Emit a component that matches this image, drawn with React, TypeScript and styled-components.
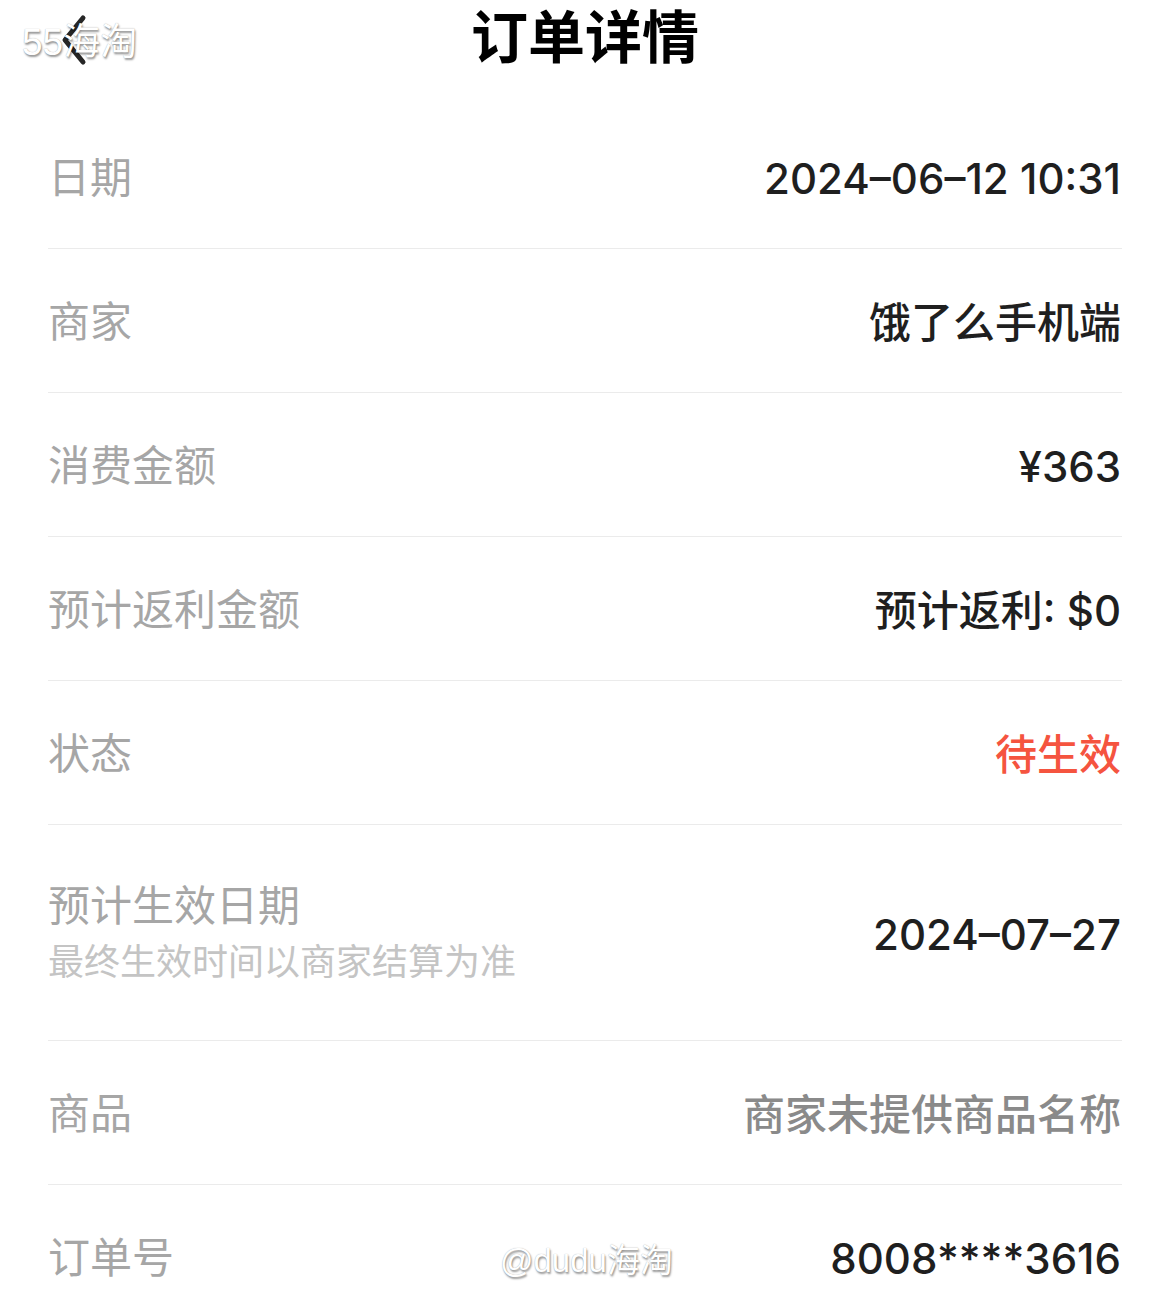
import React from 'react';
import styled, { createGlobalStyle } from 'styled-components';

const GlobalStyle = createGlobalStyle`
  html, body {
    margin: 0;
    padding: 0;
    background: #ffffff;
  }
  body {
    font-family: "Liberation Sans", "Noto Sans CJK SC", sans-serif;
  }
`;

const Page = styled.div`
  position: relative;
  width: 1170px;
  min-height: 1312px;
  overflow: hidden;
  background: #ffffff;
`;

const Header = styled.header`
  position: relative;
  height: 76px;
  display: flex;
  align-items: center;
  justify-content: center;
`;

const BackIcon = styled.div`
  position: absolute;
  z-index: 2;
  left: 58px;
  top: 12px;
  width: 30px;
  height: 56px;
  cursor: pointer;

  svg {
    display: block;
  }
`;

const Title = styled.h1`
  margin: 0;
  font-size: 57px;
  font-weight: 700;
  color: #000000;
  line-height: 1;
`;

const List = styled.div`
  padding: 29px 48px 0;
`;

const Row = styled.div<{ tall?: boolean }>`
  box-sizing: border-box;
  display: flex;
  align-items: center;
  justify-content: space-between;
  height: ${p => (p.tall ? '216px' : '144px')};
  padding-top: 4px;
  border-bottom: 1px solid #ebebeb;
  &:last-child {
    border-bottom: none;
  }
`;

const LabelBlock = styled.div`
  display: flex;
  flex-direction: column;
  gap: 14px;
  margin-top: -2px;
`;

const Label = styled.span`
  font-size: 42px;
  line-height: 44px;
  color: #a6a6a6;
`;

const SubLabel = styled.span`
  font-size: 36px;
  line-height: 40px;
  color: #c4c4c4;
`;

const Value = styled.span<{ tone?: 'dark' | 'red' | 'gray' }>`
  font-family: Inter, "Noto Sans CJK SC", sans-serif;
  font-size: 42px;
  line-height: 44px;
  font-weight: 500;
  margin-right: 1px;
  color: ${p => (p.tone === 'red' ? '#f5543f' : p.tone === 'gray' ? '#8a8a8a' : '#1f1f1f')};
`;

const Watermark = styled.span<{ size: number }>`
  position: absolute;
  z-index: 3;
  font-family: "Liberation Sans", "Noto Sans CJK SC", sans-serif;
  font-size: ${p => p.size}px;
  line-height: 1;
  color: #ffffff;
  text-shadow: 0 0 1px rgba(0, 0, 0, 0.35), 1px 2px 2px rgba(0, 0, 0, 0.4);
  pointer-events: none;
  white-space: nowrap;
`;

const rows = [
  { label: '日期', value: '2024–06–12 10:31' },
  { label: '商家', value: '饿了么手机端' },
  { label: '消费金额', value: '¥363' },
  { label: '预计返利金额', value: '预计返利: $0' },
  { label: '状态', value: '待生效', tone: 'red' as const },
];

export default function App() {
  return (
    <Page>
      <GlobalStyle />
      <Header>
        <BackIcon aria-label="back">
          <svg width="30" height="56" viewBox="0 0 30 56">
            <path d="M25 6 L7 28 L25 50" fill="none" stroke="#262626" strokeWidth="5" strokeLinecap="round" strokeLinejoin="round" />
          </svg>
        </BackIcon>
        <Title>订单详情</Title>
      </Header>
      <Watermark size={37} style={{ left: 22, top: 24 }}>55海淘</Watermark>
      <List>
        {rows.map(r => (
          <Row key={r.label}>
            <Label>{r.label}</Label>
            <Value tone={r.tone}>{r.value}</Value>
          </Row>
        ))}
        <Row tall>
          <LabelBlock>
            <Label>预计生效日期</Label>
            <SubLabel>最终生效时间以商家结算为准</SubLabel>
          </LabelBlock>
          <Value>2024–07–27</Value>
        </Row>
        <Row>
          <Label>商品</Label>
          <Value tone="gray">商家未提供商品名称</Value>
        </Row>
        <Row>
          <Label>订单号</Label>
          <Value>8008****3616</Value>
        </Row>
      </List>
      <Watermark size={33} style={{ left: 500, top: 1244 }}>@dudu海淘</Watermark>
    </Page>
  );
}
